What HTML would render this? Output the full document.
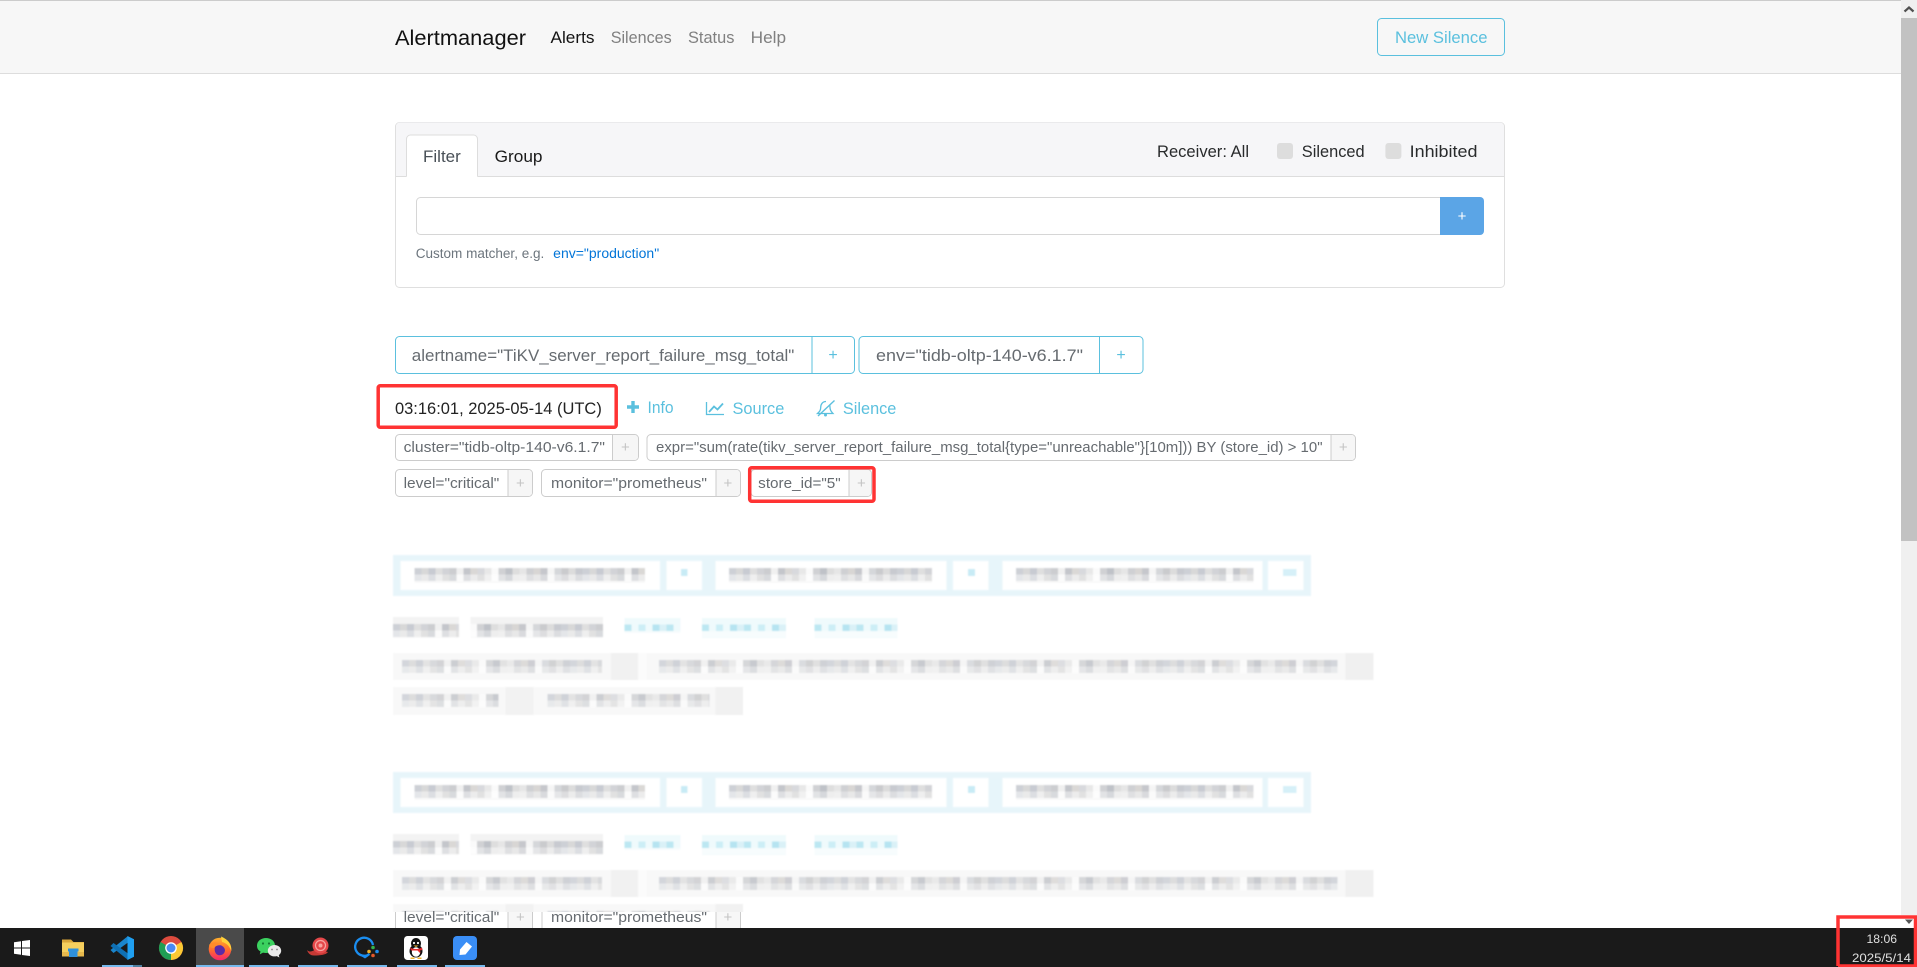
<!DOCTYPE html>
<html lang="en">
<head>
<meta charset="utf-8">
<title>Alertmanager</title>
<style>
html,body{margin:0;padding:0;background:#fff;width:1917px;height:967px;overflow:hidden}
svg{display:block;font-family:"Liberation Sans",Arial,sans-serif}
.nav{font-size:17px}
.g{font-size:17px;fill:#666b70}
.l{font-size:15px;fill:#666b70}
.p{font-size:15px;fill:#c4c4c4;text-anchor:middle}
.pc{font-size:16px;fill:#5bc0de;text-anchor:middle}
.c{fill:#5bc0de;font-size:17px}
.box{fill:#fff;stroke:#ccc}
.gb{fill:#fff;stroke:#5bc0de}
.red{fill:none;stroke:#ff3333;stroke-width:3.5}
</style>
</head>
<body>
<svg width="1917" height="967" viewBox="0 0 1917 967" xmlns="http://www.w3.org/2000/svg">
<defs>
<pattern id="mg" patternUnits="userSpaceOnUse" width="168" height="19.5">
<rect width="168" height="19.5" fill="#f0f0f0"/>
<rect x="0" width="7" height="6.5" fill="#cdd0d6"/><rect x="7" width="7" height="6.5" fill="#d8d8d8"/><rect x="14" width="7" height="6.5" fill="#c8cbd2"/><rect x="21" width="7" height="6.5" fill="#dfdfdf"/><rect x="28" width="7" height="6.5" fill="#d2d3d7"/><rect x="35" width="7" height="6.5" fill="#cccdd0"/><rect x="42" width="7" height="6.5" fill="#f0f0f0"/><rect x="49" width="7" height="6.5" fill="#c4c6cb"/><rect x="56" width="7" height="6.5" fill="#dad8d6"/><rect x="63" width="7" height="6.5" fill="#d8d9dd"/><rect x="70" width="7" height="6.5" fill="#e8e8e8"/><rect x="77" width="7" height="6.5" fill="#fafafa"/><rect x="84" width="7" height="6.5" fill="#d0d1d4"/><rect x="91" width="7" height="6.5" fill="#bfc2c8"/><rect x="98" width="7" height="6.5" fill="#dedede"/><rect x="105" width="7" height="6.5" fill="#e6e6e6"/><rect x="112" width="7" height="6.5" fill="#cfd0d3"/><rect x="119" width="7" height="6.5" fill="#d8d6d4"/><rect x="126" width="7" height="6.5" fill="#c6c7cc"/><rect x="133" width="7" height="6.5" fill="#f5f5f5"/><rect x="140" width="7" height="6.5" fill="#d5d7da"/><rect x="147" width="7" height="6.5" fill="#cacbcd"/><rect x="154" width="7" height="6.5" fill="#dcdcdc"/><rect x="161" width="7" height="6.5" fill="#c8cad0"/>
<rect x="0" y="6.5" width="7" height="6.5" fill="#e4e6e9"/><rect x="7" y="6.5" width="7" height="6.5" fill="#eaeaea"/><rect x="14" y="6.5" width="7" height="6.5" fill="#dcdee2"/><rect x="21" y="6.5" width="7" height="6.5" fill="#efefef"/><rect x="28" y="6.5" width="7" height="6.5" fill="#e1e1e1"/><rect x="35" y="6.5" width="7" height="6.5" fill="#d8dadd"/><rect x="42" y="6.5" width="7" height="6.5" fill="#fbfbfb"/><rect x="49" y="6.5" width="7" height="6.5" fill="#dedfe2"/><rect x="56" y="6.5" width="7" height="6.5" fill="#ececec"/><rect x="63" y="6.5" width="7" height="6.5" fill="#e1e1e1"/><rect x="70" y="6.5" width="7" height="6.5" fill="#f1f1f1"/><rect x="77" y="6.5" width="7" height="6.5" fill="#fdfdfd"/><rect x="84" y="6.5" width="7" height="6.5" fill="#e2e3e5"/><rect x="91" y="6.5" width="7" height="6.5" fill="#d6d8dc"/><rect x="98" y="6.5" width="7" height="6.5" fill="#eeeeee"/><rect x="105" y="6.5" width="7" height="6.5" fill="#f0f0f0"/><rect x="112" y="6.5" width="7" height="6.5" fill="#dfe0e2"/><rect x="119" y="6.5" width="7" height="6.5" fill="#e8e8e8"/><rect x="126" y="6.5" width="7" height="6.5" fill="#d9dadd"/><rect x="133" y="6.5" width="7" height="6.5" fill="#fafafa"/><rect x="140" y="6.5" width="7" height="6.5" fill="#e5e6e8"/><rect x="147" y="6.5" width="7" height="6.5" fill="#dddddf"/><rect x="154" y="6.5" width="7" height="6.5" fill="#ececec"/><rect x="161" y="6.5" width="7" height="6.5" fill="#dcdde0"/>
<rect y="13" width="168" height="6.500" fill="#f9f9f9"/>
</pattern>
<pattern id="mc" patternUnits="userSpaceOnUse" width="42" height="19.5">
<rect width="42" height="19.5" fill="#effafc"/>
<rect x="0" y="6.5" width="7" height="6.5" fill="#bce7f2"/><rect x="14" y="6.5" width="7" height="6.5" fill="#cceef6"/><rect x="28" y="6.5" width="7" height="6.5" fill="#b6e4f1"/><rect x="35" y="6.5" width="7" height="6.5" fill="#daf1f7"/>
<rect y="13" width="42" height="6.5" fill="#f7fcfd"/>
</pattern>
<filter id="bl" filterUnits="userSpaceOnUse" x="385" y="545" width="1000" height="180"><feGaussianBlur stdDeviation="0.7"/></filter>
<linearGradient id="ff" x1="0" y1="0" x2="0" y2="1"><stop offset="0" stop-color="#ffb02e"/><stop offset=".55" stop-color="#ff6a2e"/><stop offset="1" stop-color="#f5246e"/></linearGradient>
<g id="sec" filter="url(#bl)">
<rect x="393" y="555" width="918" height="41" fill="#e7f5fa"/>
<rect x="400.500" y="561" width="259.500" height="29" fill="#fff"/><rect x="666.500" y="561" width="35.500" height="29" fill="#fff"/><rect x="715.500" y="561" width="231" height="29" fill="#fff"/><rect x="953" y="561" width="35.500" height="29" fill="#fff"/><rect x="1002.500" y="561" width="260" height="29" fill="#fff"/><rect x="1268" y="561" width="35.500" height="29" fill="#fff"/>
<g transform="translate(414.500,568)"><rect width="230.500" height="15" fill="url(#mg)"/></g>
<g transform="translate(729,568)"><rect width="203" height="15" fill="url(#mg)"/></g>
<g transform="translate(1016,568)"><rect width="237.500" height="15" fill="url(#mg)"/></g>
<rect x="681" y="569" width="6.500" height="7" fill="#c8ebf5"/><rect x="968" y="569" width="7" height="7" fill="#c8ebf5"/><rect x="1283" y="569" width="13.500" height="7" fill="#d6f0f8"/>
<rect x="393" y="617" width="210" height="21" fill="#f3f3f3"/>
<g transform="translate(393,624)"><rect width="210" height="14" fill="url(#mg)"/></g>
<rect x="459" y="617" width="11.500" height="21" fill="#fff"/>
<g transform="translate(624.500,618)"><rect width="56" height="15" fill="url(#mc)"/></g>
<g transform="translate(702,618)"><rect width="84" height="20" fill="url(#mc)"/></g>
<g transform="translate(814.500,618)"><rect width="83" height="20" fill="url(#mc)"/></g>
<rect x="393" y="653" width="980" height="27" fill="#f8f8f8"/>
<g transform="translate(402,660)" opacity=".85"><rect width="200" height="14" fill="url(#mg)"/></g>
<rect x="611" y="653" width="27" height="27" fill="#f1f1f1"/>
<rect x="638" y="653" width="9" height="27" fill="#fbfbfb"/>
<g transform="translate(659,660)" opacity=".85"><rect width="678.500" height="14" fill="url(#mg)"/></g>
<rect x="1345.500" y="653" width="28" height="27" fill="#f0f0f0"/>
<rect x="393" y="687" width="350" height="28" fill="#f8f8f8"/>
<g transform="translate(402,694)" opacity=".85"><rect width="96.500" height="14" fill="url(#mg)"/></g>
<rect x="505.500" y="687" width="28" height="28" fill="#f2f2f2"/>
<g transform="translate(547.500,694)" opacity=".85"><rect width="162" height="14" fill="url(#mg)"/></g>
<rect x="715.500" y="687" width="27.500" height="28" fill="#f1f1f1"/>
</g>
</defs>

<!-- navbar -->
<rect x="0" y="0" width="1901" height="73" fill="#f7f7f7"/>
<rect x="0" y="0" width="1901" height="1" fill="#cccccc"/>
<rect x="0" y="73" width="1901" height="1" fill="#dddddd"/>
<text x="395" y="45" font-size="21.500" fill="#111" textLength="131" lengthAdjust="spacingAndGlyphs">Alertmanager</text>
<text class="nav" x="550.500" y="43" fill="#141414" textLength="44" lengthAdjust="spacingAndGlyphs">Alerts</text>
<text class="nav" x="610.700" y="43" fill="#808080" textLength="61" lengthAdjust="spacingAndGlyphs">Silences</text>
<text class="nav" x="688" y="43" fill="#808080" textLength="46.400" lengthAdjust="spacingAndGlyphs">Status</text>
<text class="nav" x="750.700" y="43" fill="#808080" textLength="35.400" lengthAdjust="spacingAndGlyphs">Help</text>
<rect x="1377.500" y="18.500" width="127" height="37" rx="4" fill="none" stroke="#5bc0de"/>
<text x="1395" y="43" font-size="17" fill="#5bc0de" textLength="92.500" lengthAdjust="spacingAndGlyphs">New Silence</text>

<!-- filter card -->
<rect x="395.500" y="122.500" width="1109" height="165" rx="4" fill="#fff" stroke="#dfdfdf"/>
<path d="M396 176V126.500a4 4 0 0 1 4-4H1500a4 4 0 0 1 4 4V176Z" fill="#f6f6f8"/>
<rect x="396" y="176" width="1108" height="1" fill="#dddddd"/>
<path d="M406.500 177V139a4 4 0 0 1 4-4H473.500a4 4 0 0 1 4 4V177Z" fill="#fff"/>
<path d="M406.500 176.500V139a4 4 0 0 1 4-4H473.500a4 4 0 0 1 4 4V176.500" fill="none" stroke="#dddddd"/>
<text x="423" y="162" font-size="17" fill="#495057" textLength="37.800" lengthAdjust="spacingAndGlyphs">Filter</text>
<text x="494.600" y="162" font-size="17" fill="#1a1a1a" textLength="47.900" lengthAdjust="spacingAndGlyphs">Group</text>
<text x="1157" y="157" font-size="17" fill="#292b2c" textLength="92" lengthAdjust="spacingAndGlyphs">Receiver: All</text>
<rect x="1277" y="143" width="16" height="16" rx="3" fill="#dddddd"/>
<text x="1301.800" y="157" font-size="17" fill="#292b2c" textLength="62.800" lengthAdjust="spacingAndGlyphs">Silenced</text>
<rect x="1385.400" y="143" width="16" height="16" rx="3" fill="#dddddd"/>
<text x="1409.600" y="157" font-size="17" fill="#292b2c" textLength="67.900" lengthAdjust="spacingAndGlyphs">Inhibited</text>
<rect x="416.500" y="197.500" width="1030" height="37" rx="4" fill="#fff" stroke="#d6d6d6"/>
<path d="M1440 197H1480a4 4 0 0 1 4 4V231a4 4 0 0 1-4 4H1440Z" fill="#5ba5e6"/>
<text x="1462" y="221" font-size="15" fill="#fff" text-anchor="middle">+</text>
<text x="415.700" y="258" font-size="13.500" fill="#6c757d" textLength="128.600" lengthAdjust="spacingAndGlyphs">Custom matcher, e.g.</text>
<text x="553.200" y="258" font-size="13.500" fill="#0275d8" textLength="106" lengthAdjust="spacingAndGlyphs">env="production"</text>

<!-- group labels -->
<rect class="gb" x="395.500" y="336.500" width="459" height="37" rx="4"/>
<rect x="811.500" y="337" width="1" height="36" fill="#5bc0de"/>
<text class="g" x="411.800" y="361" textLength="382.500" lengthAdjust="spacingAndGlyphs">alertname="TiKV_server_report_failure_msg_total"</text>
<text class="pc" x="833" y="360">+</text>
<rect class="gb" x="859" y="336.500" width="284" height="37" rx="4"/>
<rect x="1099" y="337" width="1" height="36" fill="#5bc0de"/>
<text class="g" x="876" y="361" textLength="207" lengthAdjust="spacingAndGlyphs">env="tidb-oltp-140-v6.1.7"</text>
<text class="pc" x="1121" y="360">+</text>

<!-- date line -->
<text x="395" y="414" font-size="17" fill="#222" textLength="206.800" lengthAdjust="spacingAndGlyphs">03:16:01, 2025-05-14 (UTC)</text>
<path d="M627 405.300h4.300V401h3.400v4.300h4.300v3.400h-4.300v4.300h-3.400v-4.300H627Z" fill="#5bc0de"/>
<text class="c" x="647.500" y="413" textLength="26" lengthAdjust="spacingAndGlyphs">Info</text>
<path d="M706.500 402V414.500H724" fill="none" stroke="#5bc0de" stroke-width="1.300"/>
<path d="M709 412L714 406.500L717.500 409.500L723 403.500" fill="none" stroke="#5bc0de" stroke-width="1.800"/>
<text class="c" x="732.500" y="414" textLength="51.800" lengthAdjust="spacingAndGlyphs">Source</text>
<path d="M826 401.500c-3.500 0-5.300 2.800-5.300 6 0 3.200-1.500 4.300-3.200 6H833c-1.500-1.700-3-2.800-3-6 0-1 0-2-.500-3" fill="none" stroke="#5bc0de" stroke-width="1.300"/>
<path d="M818 416L834.500 400.500" stroke="#5bc0de" stroke-width="1.400"/>
<circle cx="825.500" cy="415" r="1.500" fill="#5bc0de"/>
<text class="c" x="842.900" y="414" textLength="53.500" lengthAdjust="spacingAndGlyphs">Silence</text>

<!-- labels -->
<rect class="box" x="395.500" y="434.500" width="243" height="26" rx="4"/>
<path d="M612.500 435H634.500a3.500 3.500 0 0 1 3.500 3.500V456.500a3.500 3.500 0 0 1-3.500 3.500H612.500Z" fill="#f6f6f6"/>
<rect x="612" y="435" width="1" height="25" fill="#ccc"/>
<text class="l" x="403.600" y="452" textLength="201.400" lengthAdjust="spacingAndGlyphs">cluster="tidb-oltp-140-v6.1.7"</text>
<text class="p" x="625.400" y="452">+</text>

<rect class="box" x="647" y="434.500" width="708.500" height="26" rx="4"/>
<path d="M1331 435H1351.500a3.500 3.500 0 0 1 3.500 3.500V456.500a3.500 3.500 0 0 1-3.500 3.500H1331Z" fill="#f6f6f6"/>
<rect x="1330.500" y="435" width="1" height="25" fill="#ccc"/>
<text class="l" x="656" y="452" textLength="666.500" lengthAdjust="spacingAndGlyphs">expr="sum(rate(tikv_server_report_failure_msg_total{type="unreachable"}[10m])) BY (store_id) &gt; 10"</text>
<text class="p" x="1343.200" y="452">+</text>

<rect class="box" x="395.500" y="469.500" width="137" height="27" rx="4"/>
<path d="M508 470H528.500a3.500 3.500 0 0 1 3.500 3.500V492.500a3.500 3.500 0 0 1-3.500 3.500H508Z" fill="#f6f6f6"/>
<rect x="507.500" y="470" width="1" height="26" fill="#ccc"/>
<text class="l" x="403.600" y="488" textLength="95.700" lengthAdjust="spacingAndGlyphs">level="critical"</text>
<text class="p" x="520.400" y="488">+</text>

<rect class="box" x="541.500" y="469.500" width="199" height="27" rx="4"/>
<path d="M716 470H736.500a3.500 3.500 0 0 1 3.500 3.500V492.500a3.500 3.500 0 0 1-3.500 3.500H716Z" fill="#f6f6f6"/>
<rect x="715.500" y="470" width="1" height="26" fill="#ccc"/>
<text class="l" x="551" y="488" textLength="156" lengthAdjust="spacingAndGlyphs">monitor="prometheus"</text>
<text class="p" x="727.900" y="488">+</text>

<rect class="box" x="751" y="469.500" width="120.500" height="27" rx="4"/>
<path d="M849 470H867.500a3.500 3.500 0 0 1 3.500 3.500V492.500a3.500 3.500 0 0 1-3.500 3.500H849Z" fill="#f6f6f6"/>
<rect x="848.500" y="470" width="1" height="26" fill="#ccc"/>
<text class="l" x="758.200" y="488" textLength="82.500" lengthAdjust="spacingAndGlyphs">store_id="5"</text>
<text class="p" x="861.400" y="488">+</text>

<!-- annotations -->
<rect class="red" x="378.200" y="385.750" width="238" height="41.500" rx="2"/>
<rect class="red" x="749.700" y="467.750" width="124.300" height="33.500" rx="2"/>

<!-- redacted sections -->
<use href="#sec"/>
<use href="#sec" transform="translate(0,217)"/>
<rect x="385" y="912" width="1000" height="20" fill="#fff"/>

<!-- partially visible row -->
<rect x="395" y="912" width="1" height="16" fill="#ccc"/>
<rect x="532" y="912" width="1" height="16" fill="#ccc"/><rect x="507.500" y="912" width="1" height="16" fill="#ccc"/>
<rect x="508.500" y="912" width="23.500" height="16" fill="#f7f7f7"/>
<rect x="541.500" y="912" width="1" height="16" fill="#ccc"/><rect x="715.500" y="912" width="1" height="16" fill="#ccc"/><rect x="740" y="912" width="1" height="16" fill="#ccc"/>
<rect x="716.500" y="912" width="23.500" height="16" fill="#f7f7f7"/>
<text class="l" x="403.600" y="922" textLength="95.700" lengthAdjust="spacingAndGlyphs">level="critical"</text>
<text class="p" x="520.400" y="922">+</text>
<text class="l" x="551" y="922" textLength="156" lengthAdjust="spacingAndGlyphs">monitor="prometheus"</text>
<text class="p" x="727.900" y="922">+</text>

<!-- scrollbar -->
<rect x="1901" y="0" width="16" height="928" fill="#f0f0f0"/>
<rect x="1901" y="18" width="16" height="523" fill="#c2c2c2"/>
<path d="M1904.500 11.500L1909 7.500L1913.500 11.500" fill="none" stroke="#505050" stroke-width="2.200"/>
<path d="M1836 915h81v13H1836Z" fill="#fff"/>

<!-- taskbar -->
<rect x="0" y="928" width="1917" height="39" fill="#1a1a1a"/>
<rect x="196" y="928" width="48" height="39" fill="#4a4a4a"/>
<g fill="#76b9ed">
<rect x="102" y="965" width="31" height="2"/><rect x="133" y="965" width="9" height="2" fill="#4f7f9f"/>
<rect x="196" y="965" width="48" height="2"/>
<rect x="249" y="965" width="40" height="2"/><rect x="298" y="965" width="40" height="2"/><rect x="347" y="965" width="40" height="2"/><rect x="397" y="965" width="40" height="2"/><rect x="445" y="965" width="40" height="2"/>
</g>
<!-- windows -->
<path d="M14 942.300L21 941.200V947.500H14ZM22 941L30 940V947.500H22ZM14 948.500H21V954.800L14 953.700ZM22 948.500H30V956L22 955Z" fill="#fff"/>
<!-- folder -->
<path d="M62 939.500H71L73.500 942H84V944H62Z" fill="#d9a63a"/>
<path d="M62 942.500H84V956.500H62Z" fill="#f5cf5e"/>
<path d="M62 952H84V956.500H62Z" fill="#e6b84c"/>
<path d="M68 951.500H78.500V948.500H68ZM69 951.500H77.500V957H69Z" fill="#2f90da"/>
<!-- vscode -->
<path d="M128 936L110.500 950L113.500 953L128 942.500Z" fill="#1a85cc"/>
<path d="M128 960L110.500 946L113.500 943L128 953.500Z" fill="#0f70b4"/>
<path d="M127.500 936L134 939.200V956.800L127.500 960Z" fill="#1f9ff0"/>
<!-- chrome -->
<circle cx="171" cy="948" r="12" fill="#dd4b3e"/>
<path d="M171 948L160.600 942A12 12 0 0 0 171 960Z" fill="#1f9e54"/>
<path d="M171 948L171 960A12 12 0 0 0 181.400 942Z" fill="#fcc934"/>
<circle cx="171" cy="948" r="5.800" fill="#fff"/><circle cx="171" cy="948" r="4.500" fill="#4a8af4"/>
<!-- firefox -->
<circle cx="220" cy="949" r="11.300" fill="url(#ff)"/>
<path d="M221 936.500C226 938.500 232 943 231.300 951C229 945 226 943 222 942Z" fill="#ffd23a"/>
<path d="M215 946C218 944 224 945 225 950C225 954 221 956 218 955C215 954 214 950 215 946Z" fill="#5b2aa6"/>
<path d="M209 945C212 941 218 942 222 945C218 945 215 946 214.500 948C212 948.500 210 947 209 945Z" fill="#ff8b2a"/>
<!-- wechat -->
<path d="M266 938c5 0 9 3.300 9 7.500 0 4.200-4 7.500-9 7.500-1 0-2-.100-3-.400l-3.200 1.800.700-3c-2.700-1.300-3.500-3.500-3.500-5.900 0-4.200 4-7.500 9-7.500Z" fill="#3bd15f"/>
<circle cx="263" cy="943.500" r="1.100" fill="#147a33"/><circle cx="269" cy="943.500" r="1.100" fill="#147a33"/>
<path d="M274.500 945c3.700 0 6.700 2.600 6.700 5.700 0 1.800-1 3.300-2.400 4.400l.600 2.400-2.600-1.400c-.700.200-1.500.300-2.300.300-3.700 0-6.700-2.500-6.700-5.700s3-5.700 6.700-5.700Z" fill="#e9e9e9"/>
<circle cx="272" cy="949.500" r=".900" fill="#888"/><circle cx="277" cy="949.500" r=".900" fill="#888"/>
<!-- snail -->
<path d="M307 950C310 953 313 951 316 949L328 952C326 955 320 955.500 314 955.500C310 955.500 308 953 307 950Z" fill="#c63a35"/>
<circle cx="320.500" cy="945.500" r="8" fill="#e5484a"/>
<circle cx="320.500" cy="945.500" r="5" fill="none" stroke="#f6a5a0" stroke-width="1.200"/>
<circle cx="320.500" cy="945.500" r="2" fill="#f6a5a0"/>
<!-- qchat -->
<path d="M369.500 954A9 9 0 1 1 373 945" fill="none" stroke="#1b8ef0" stroke-width="2.300"/>
<path d="M361 956L369 955.800L365 958.500Z" fill="#1b8ef0"/>
<circle cx="373" cy="947.500" r="1.800" fill="#35b44a"/><circle cx="369" cy="951.500" r="1.800" fill="#f2b32a"/><circle cx="377" cy="951.500" r="1.800" fill="#1b8ef0"/><circle cx="373" cy="955.500" r="1.800" fill="#e3582a"/>
<!-- qq -->
<rect x="404" y="936" width="24" height="24" rx="3.500" fill="#fff"/>
<ellipse cx="416" cy="943.500" rx="5" ry="5.500" fill="#111"/>
<ellipse cx="416" cy="951" rx="6.500" ry="6.500" fill="#111"/>
<ellipse cx="416" cy="952" rx="4.200" ry="4.800" fill="#fff"/>
<path d="M410 947.500C413 949.500 419 949.500 422 947.500L422.500 950L420 950.500L420.500 953.500L417.500 950.500H411Z" fill="#e3282b"/>
<circle cx="414" cy="943" r="1.100" fill="#fff"/><circle cx="418" cy="943" r="1.100" fill="#fff"/>
<path d="M413.500 945.500H418.500L416 947Z" fill="#f5b52a"/>
<path d="M410.500 957.500H414.500V959H410.500ZM417.500 957.500H421.500V959H417.500Z" fill="#f5b52a"/>
<!-- blue note -->
<rect x="453" y="936" width="24" height="24" rx="4" fill="#3a8ef6"/>
<path d="M466.500 942L472 946.500L465.500 954.500L459.500 955L460 949.500Z" fill="#fff"/>

<!-- clock -->
<path d="M1905 919.500H1913L1909 924Z" fill="#555"/>
<text x="1866.500" y="943" font-size="12" fill="#e0e0e0" textLength="30.500" lengthAdjust="spacingAndGlyphs">18:06</text>
<text x="1852" y="962" font-size="12" fill="#e0e0e0" textLength="59" lengthAdjust="spacingAndGlyphs">2025/5/14</text>
<path d="M1838 966V917H1915.500V966H1838" fill="none" stroke="#ff3333" stroke-width="3.500"/>
</svg>
</body>
</html>
